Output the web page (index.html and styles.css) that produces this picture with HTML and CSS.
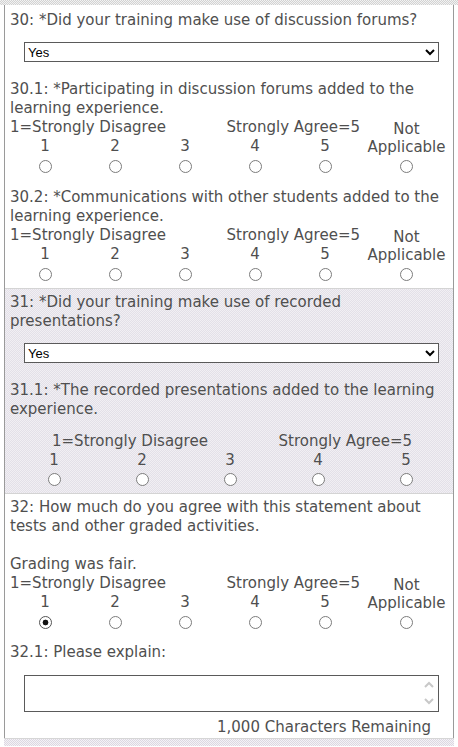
FILE: index.html
```html
<!DOCTYPE html>
<html>
<head>
<meta charset="utf-8">
<link rel="stylesheet" href="styles.css">
</head>
<body>
<div class="strip top"></div>
<div class="survey">
  <section class="q">
    <div class="qtext">30: *Did your training make use of discussion forums?</div>
    <div class="selwrap">
      <select class="sel"><option>Yes</option><option>No</option></select>
      <svg class="chev" width="10" height="8" viewBox="0 0 10 8"><polyline points="1,2 5,6 9,2" fill="none" stroke="#000" stroke-width="2"/></svg>
    </div>
    <div class="sub">
      <div class="qtext">30.1: *Participating in discussion forums added to the learning experience.</div>
      <div class="scale6">
        <div class="lbl-l">1=Strongly Disagree</div>
        <div class="lbl-r">Strongly Agree=5</div>
        <div class="na">Not<br>Applicable</div>
        <div class="num">1</div><div class="num">2</div><div class="num">3</div><div class="num">4</div><div class="num">5</div>
        <div class="rad"><input type="radio" name="r301"></div>
        <div class="rad"><input type="radio" name="r301"></div>
        <div class="rad"><input type="radio" name="r301"></div>
        <div class="rad"><input type="radio" name="r301"></div>
        <div class="rad"><input type="radio" name="r301"></div>
        <div class="rad"><input type="radio" name="r301"></div>
      </div>
    </div>
    <div class="sub">
      <div class="qtext">30.2: *Communications with other students added to the learning experience.</div>
      <div class="scale6">
        <div class="lbl-l">1=Strongly Disagree</div>
        <div class="lbl-r">Strongly Agree=5</div>
        <div class="na">Not<br>Applicable</div>
        <div class="num">1</div><div class="num">2</div><div class="num">3</div><div class="num">4</div><div class="num">5</div>
        <div class="rad"><input type="radio" name="r302"></div>
        <div class="rad"><input type="radio" name="r302"></div>
        <div class="rad"><input type="radio" name="r302"></div>
        <div class="rad"><input type="radio" name="r302"></div>
        <div class="rad"><input type="radio" name="r302"></div>
        <div class="rad"><input type="radio" name="r302"></div>
      </div>
    </div>
  </section>

  <section class="q alt">
    <div class="qtext">31: *Did your training make use of recorded presentations?</div>
    <div class="selwrap">
      <select class="sel"><option>Yes</option><option>No</option></select>
      <svg class="chev" width="10" height="8" viewBox="0 0 10 8"><polyline points="1,2 5,6 9,2" fill="none" stroke="#000" stroke-width="2"/></svg>
    </div>
    <div class="sub">
      <div class="qtext">31.1: *The recorded presentations added to the learning experience.</div>
      <div class="scale5">
        <div class="labels5"><span>1=Strongly Disagree</span><span>Strongly Agree=5</span></div>
        <div class="grid5">
          <div class="num">1</div><div class="num">2</div><div class="num">3</div><div class="num">4</div><div class="num">5</div>
          <div class="rad"><input type="radio" name="r311"></div>
          <div class="rad"><input type="radio" name="r311"></div>
          <div class="rad"><input type="radio" name="r311"></div>
          <div class="rad"><input type="radio" name="r311"></div>
          <div class="rad"><input type="radio" name="r311"></div>
        </div>
      </div>
    </div>
  </section>

  <section class="q last">
    <div class="qtext">32: How much do you agree with this statement about tests and other graded activities.</div>
    <div class="qtext blank">&nbsp;</div>
    <div class="qtext">Grading was fair.</div>
    <div class="scale6">
      <div class="lbl-l">1=Strongly Disagree</div>
      <div class="lbl-r">Strongly Agree=5</div>
      <div class="na">Not<br>Applicable</div>
      <div class="num">1</div><div class="num">2</div><div class="num">3</div><div class="num">4</div><div class="num">5</div>
      <div class="rad"><input type="radio" name="r32" checked></div>
      <div class="rad"><input type="radio" name="r32"></div>
      <div class="rad"><input type="radio" name="r32"></div>
      <div class="rad"><input type="radio" name="r32"></div>
      <div class="rad"><input type="radio" name="r32"></div>
      <div class="rad"><input type="radio" name="r32"></div>
    </div>
    <div class="sub explain">
      <div class="qtext">32.1: Please explain:</div>
      <div class="tawrap">
        <textarea class="ta"></textarea>
        <svg class="scrollarrows" width="12" height="26" viewBox="0 0 12 26"><polyline points="2,7 6,3 10,7" fill="none" stroke="#c8c8c8" stroke-width="2"/><polyline points="2,19 6,23 10,19" fill="none" stroke="#c8c8c8" stroke-width="2"/></svg>
      </div>
      <div class="remaining">1,000 Characters Remaining</div>
    </div>
  </section>
</div>
<div class="strip bottom"></div>
</body>
</html>
```

FILE: styles.css
```css
html, body {
  margin: 0;
  padding: 0;
  background: #fff;
}
body {
  font-family: "DejaVu Sans", Verdana, sans-serif;
  font-size: 15px;
  line-height: 19px;
  color: #4f4f4f;
  width: 458px;
}
.strip {
  height: 5px;
  background: repeating-conic-gradient(#d2d2d2 0 25%, #f2f2f2 0 50%) 0 0 / 2px 2px;
}
.strip.bottom {
  height: 7px;
  margin: 0 4px;
  border-top: 1px solid #d6d6d6;
  background: repeating-conic-gradient(#dcd8e2 0 25%, #f4f2f6 0 50%) 0 0 / 2px 2px;
}
.survey {
  margin: 0 4px;
  border-left: 1px solid #9a9a9a;
  border-right: 1px solid #9a9a9a;
}
.q {
  padding: 6px 0 7px 5px;
}
.q.alt {
  border-top: 1px solid #d4d4d4;
  border-bottom: 1px solid #d4d4d4;
  padding: 4px 0 7px 5px;
  background: repeating-conic-gradient(#e3e0e8 0 25%, #f1eff3 0 50%) 0 0 / 2px 2px;
}
.q.last {
  padding: 4px 0 1px 5px;
}
.selwrap {
  position: relative;
  margin: 12px 14px 0 14px;
  height: 20px;
}
.sel {
  appearance: none;
  -webkit-appearance: none;
  display: block;
  box-sizing: border-box;
  width: 100%;
  height: 20px;
  margin: 0;
  padding: 0 0 0 3px;
  border: 1px solid #5a5a5a;
  border-radius: 0;
  background: #fff;
  font-family: "Liberation Sans", Arial, sans-serif;
  font-size: 13px;
  color: #000;
}
.chev {
  position: absolute;
  right: 4px;
  top: 6px;
  pointer-events: none;
}
.sub {
  margin-top: 18px;
}
.sub + .sub {
  margin-top: 15px;
}
.sub.explain {
  margin-top: 14px;
}
.scale6 {
  display: grid;
  grid-template-columns: 70px 70px 70px 70px 70px 1fr;
  grid-template-rows: 19px 20px auto;
}
.lbl-l {
  grid-column: 1 / 4;
  grid-row: 1;
  white-space: nowrap;
}
.lbl-r {
  grid-column: 4 / 6;
  grid-row: 1;
  text-align: right;
  white-space: nowrap;
}
.na {
  grid-column: 6;
  grid-row: 1 / 3;
  text-align: center;
  padding-top: 2px;
  line-height: 18px;
}
.num {
  text-align: center;
}
.rad {
  display: flex;
  justify-content: center;
  padding-top: 3px;
}
input[type="radio"] {
  appearance: none;
  -webkit-appearance: none;
  box-sizing: border-box;
  width: 13px;
  height: 13px;
  margin: 0;
  border: 1px solid #7c7c7c;
  border-radius: 50%;
  background: #fff;
}
input[type="radio"]:checked {
  background: radial-gradient(circle, #111 0 2.6px, #fff 3.2px);
  border-color: #555;
}
.scale5 {
  padding-top: 13px;
}
.labels5 {
  display: flex;
  justify-content: space-between;
  padding: 0 41px 0 42px;
}
.grid5 {
  display: grid;
  grid-template-columns: repeat(5, 1fr);
  grid-template-rows: 20px auto;
  margin-right: 3px;
}
.grid5 .rad {
  padding-top: 2px;
}
.tawrap {
  position: relative;
  margin: 13px 14px 0 14px;
  height: 37px;
}
.ta {
  display: block;
  box-sizing: border-box;
  width: 100%;
  height: 37px;
  margin: 0;
  border: 1px solid #5a5a5a;
  border-radius: 0;
  resize: none;
  background: #fff;
  outline: none;
}
.scrollarrows {
  position: absolute;
  right: 4px;
  top: 5px;
}
.remaining {
  margin-top: 6px;
  text-align: right;
  padding-right: 22px;
}
```
